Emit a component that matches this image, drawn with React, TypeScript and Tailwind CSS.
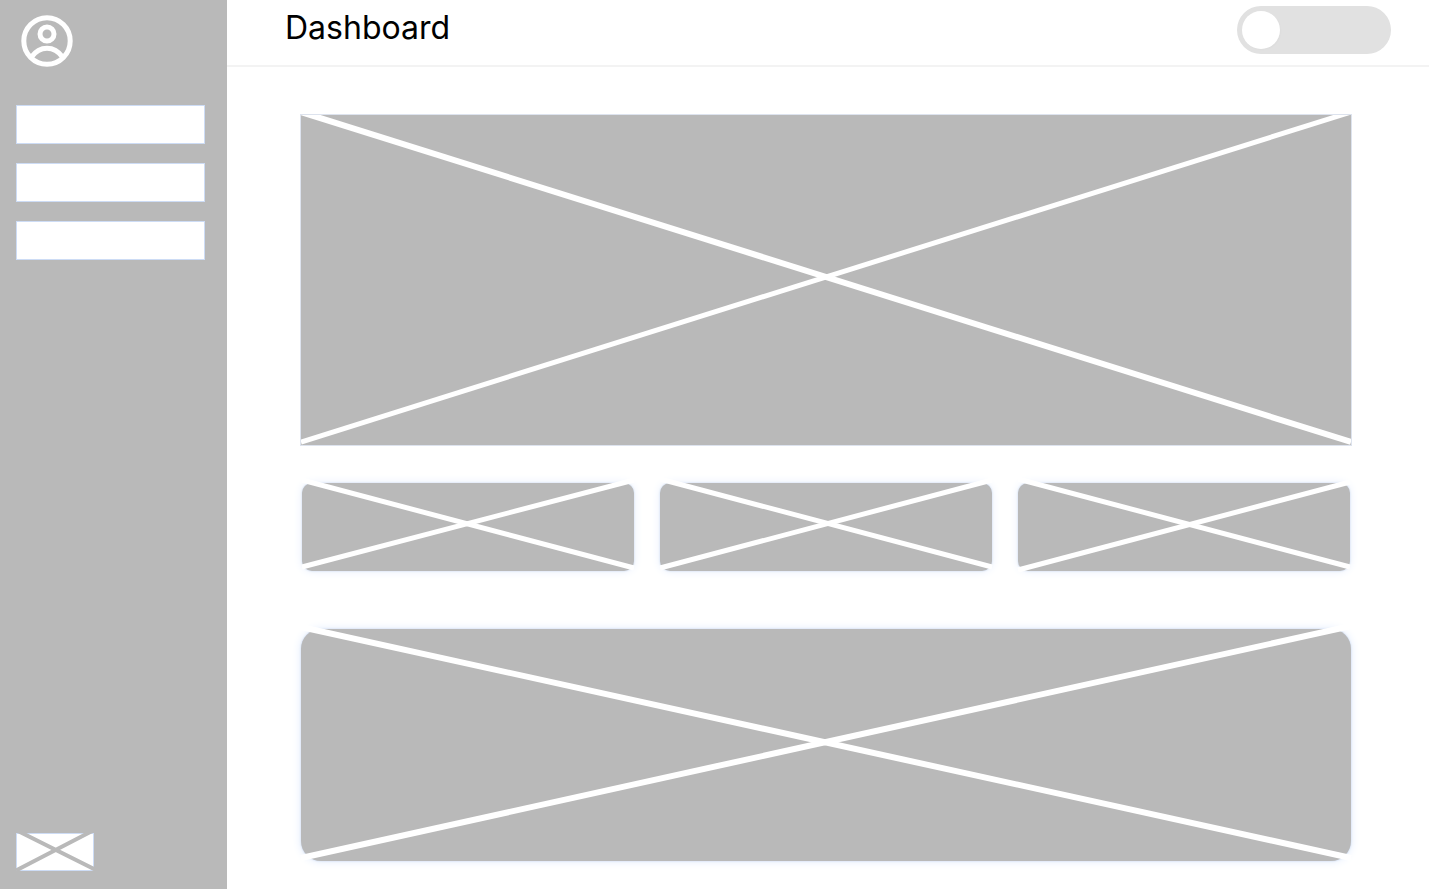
import { useState } from "react";

type Line = { from: number; to: number };

type PlaceholderProps = {
  label: string;
  className: string;
  falling: Line;
  rising: Line;
  lineClass: string;
  fallingClass?: string;
};

function Placeholder({ label, className, falling, rising, lineClass, fallingClass }: PlaceholderProps) {
  return (
    <section aria-label={label} className={className}>
      <svg className={`block h-full w-full ${lineClass}`} aria-hidden="true">
        <line x1="0" y1={falling.from} x2="100%" y2={falling.to} className={fallingClass} />
        <line x1="0" y1={rising.from} x2="100%" y2={rising.to} />
      </svg>
    </section>
  );
}

const cards = [
  { label: "Card one", falling: { from: -3, to: 85 }, rising: { from: 84, to: -3 } },
  { label: "Card two", falling: { from: -4, to: 84 }, rising: { from: 85, to: -3 } },
  { label: "Card three", falling: { from: -4, to: 84 }, rising: { from: 87, to: -1 } },
];

const links = ["First section", "Second section", "Third section"];

function UserIcon() {
  return (
    <svg viewBox="0 0 52 52" className="size-[52px] fill-none stroke-white stroke-5" aria-hidden="true">
      <circle cx="26" cy="26" r="23.2" />
      <circle cx="26" cy="19" r="7" />
      <path d="M10.5 42C14 37 19.5 33.2 26 33.2s12 3.8 15.5 8.8" />
    </svg>
  );
}

function Sidebar() {
  return (
    <aside className="flex w-[227px] shrink-0 flex-col bg-[#b9b9b9] px-4 pt-[15px] pb-[18px]">
      <button type="button" aria-label="Account" className="ml-[5px] self-start">
        <UserIcon />
      </button>
      <nav className="mt-[38px] mr-1.5 flex flex-col gap-[19px]">
        {links.map((name) => (
          <a
            key={name}
            href="#"
            aria-label={name}
            className="block h-[39px] border border-[#cddcf5] bg-white"
          />
        ))}
      </nav>
      <div className="mt-auto h-[38px] w-[78px] border border-[#cddcf5] bg-white">
        <svg
          viewBox="0 0 78 38"
          className="-m-px block h-[38px] w-[78px] stroke-[#b9b9b9] stroke-4"
          aria-hidden="true"
        >
          <path d="M0 -3L80 37M0 37.5L80 -4" />
        </svg>
      </div>
    </aside>
  );
}

function Header() {
  const [on, setOn] = useState(false);
  return (
    <header className="flex h-[67px] items-start justify-between border-b-2 border-[#f3f3f3] pt-1.5 pr-[38px] pl-[58px]">
      <h1 className="text-[32px] leading-[44px] text-black">Dashboard</h1>
      <button
        type="button"
        role="switch"
        aria-checked={on}
        aria-label="Toggle view"
        onClick={() => setOn(!on)}
        className={`flex h-12 w-[154px] items-center rounded-full bg-[#e1e1e1] px-[5px] ${on ? "justify-end" : "justify-start"}`}
      >
        <span className="size-[38px] rounded-full bg-white shadow-[1px_1px_2px_rgba(0,0,0,0.02)]" />
      </button>
    </header>
  );
}

export default function App() {
  return (
    <div className="flex min-h-screen bg-white font-['Inter',sans-serif]">
      <Sidebar />
      <div className="flex min-w-0 grow flex-col">
        <Header />
        <main className="pt-[47px] pr-[77px] pb-7 pl-[73px]">
          <Placeholder
            label="Main chart"
            className="h-[332px] border border-[#dde3ee] bg-[#b9b9b9]"
            falling={{ from: -3, to: 327 }}
            rising={{ from: 327, to: -3 }}
            lineClass="stroke-white stroke-[5px]"
            fallingClass="stroke-[6px]"
          />
          <div className="mx-0.5 mt-[37px] grid grid-cols-3 gap-[26px]">
            {cards.map((card) => (
              <Placeholder
                key={card.label}
                label={card.label}
                className="h-[88px] rounded-[10px] bg-[#b9b9b9] shadow-[0_0_2px_#c3d2ea,0_0_10px_#e6eefc]"
                falling={card.falling}
                rising={card.rising}
                lineClass="overflow-visible stroke-white stroke-[5px]"
              />
            ))}
          </div>
          <Placeholder
            label="Details"
            className="mx-px mt-[58px] h-[232px] rounded-[20px] bg-[#b9b9b9] shadow-[0_0_2px_#c3d2ea,0_0_10px_#dfeafc]"
            falling={{ from: -2, to: 229 }}
            rising={{ from: 229, to: -3 }}
            lineClass="overflow-visible stroke-white stroke-[6px]"
          />
        </main>
      </div>
    </div>
  );
}
